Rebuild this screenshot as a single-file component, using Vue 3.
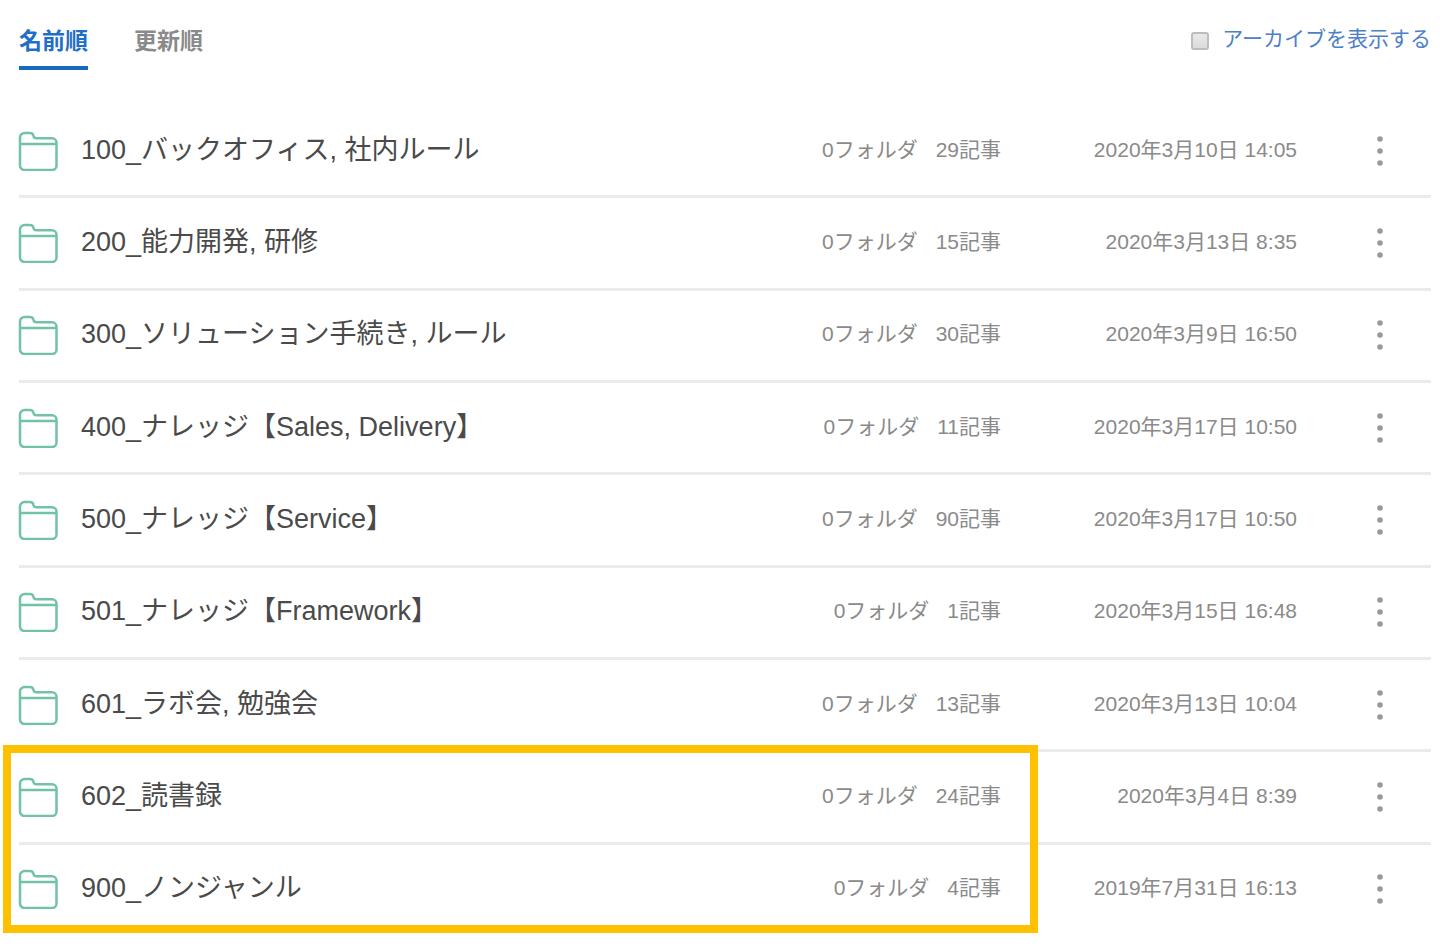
<script setup>
import { ref } from 'vue'

const sort = ref('name')
const showArchive = ref(false)

const folders = [
  { name: '100_バックオフィス, 社内ルール', articles: 29, updated: '2020年3月10日 14:05' },
  { name: '200_能力開発, 研修', articles: 15, updated: '2020年3月13日 8:35' },
  { name: '300_ソリューション手続き, ルール', articles: 30, updated: '2020年3月9日 16:50' },
  { name: '400_ナレッジ【Sales, Delivery】', articles: 11, updated: '2020年3月17日 10:50' },
  { name: '500_ナレッジ【Service】', articles: 90, updated: '2020年3月17日 10:50' },
  { name: '501_ナレッジ【Framework】', articles: 1, updated: '2020年3月15日 16:48' },
  { name: '601_ラボ会, 勉強会', articles: 13, updated: '2020年3月13日 10:04' },
  { name: '602_読書録', articles: 24, updated: '2020年3月4日 8:39' },
  { name: '900_ノンジャンル', articles: 4, updated: '2019年7月31日 16:13' },
]
</script>

<template>
  <main class="page">
    <header class="toolbar">
      <nav class="tabs">
        <button type="button" class="tab" :class="{ active: sort === 'name' }" @click="sort = 'name'">名前順</button>
        <button type="button" class="tab" :class="{ active: sort === 'updated' }" @click="sort = 'updated'">更新順</button>
      </nav>
      <div class="archive">
        <input id="archive" v-model="showArchive" type="checkbox" class="check" />
        <label for="archive">アーカイブを表示する</label>
      </div>
    </header>

    <ul class="folders">
      <li v-for="folder in folders" :key="folder.name" class="row">
        <svg class="icon" viewBox="0 0 40 40" aria-hidden="true">
          <path class="line" d="M2 34V6.500a4.500 4.500 0 0 1 4.500-4.500h5.500q3 0 3.500 3q.5 2.200 3 2.200H34a4.500 4.500 0 0 1 4.500 4.500V34.500a4.500 4.500 0 0 1-4.500 4.500H6.500a4.500 4.500 0 0 1-4.500-4.500ZM2 13H38.500" />
        </svg>
        <a href="#" class="name">{{ folder.name }}</a>
        <span class="counts">
          <span>0フォルダ</span>
          <span>{{ folder.articles }}記事</span>
        </span>
        <time class="updated">{{ folder.updated }}</time>
        <button type="button" class="more" :aria-label="folder.name">
          <svg class="dots" viewBox="0 0 6 30" aria-hidden="true">
            <circle cx="3" cy="3" r="2.800" />
            <circle cx="3" cy="15" r="2.800" />
            <circle cx="3" cy="27" r="2.800" />
          </svg>
        </button>
      </li>
      <li class="highlight" aria-hidden="true"></li>
    </ul>
  </main>
</template>

<style>
body {
  margin: 0;
  background: #fff;
}
</style>

<style scoped>
.page {
  display: flex;
  flex-direction: column;
  box-sizing: border-box;
  min-height: 100vh;
  padding: 0 9px 11px 19px;
  font-family: "Liberation Sans", "Noto Sans CJK JP", sans-serif;
  font-size: 21px;
  line-height: 30px;
  color: #8a8a8a;
}

.toolbar {
  display: flex;
  justify-content: space-between;
  align-items: flex-start;
  height: 106px;
}

.tabs {
  display: flex;
  gap: 46px;
  padding-top: 26px;
}

.tab {
  padding: 0 0 10px;
  border: 0;
  border-bottom: 4px solid transparent;
  background: none;
  font: inherit;
  font-size: 23px;
  font-weight: 700;
  color: #8a8a8a;
  cursor: pointer;
}

.tab.active {
  border-color: #1769c0;
  color: #1f6fc6;
}

.archive {
  display: flex;
  align-items: center;
  gap: 13px;
  padding-top: 24px;
  color: #4f7fc9;
}

.check {
  appearance: none;
  box-sizing: border-box;
  width: 18px;
  height: 18px;
  margin: 4px 0 0;
  border: 2px solid #bdbdbd;
  border-radius: 3px;
  background: linear-gradient(#e9e9e9, #dcdcdc);
}

.check:checked {
  background: #1769c0;
}

.folders {
  position: relative;
  flex: 1;
  display: grid;
  grid-auto-rows: 1fr;
  margin: 0;
  padding: 0;
  list-style: none;
}

.row {
  display: grid;
  grid-template-columns: 40px 1fr auto 296px 134px;
  align-items: center;
  border-bottom: 3px solid #ebebeb;
}

.row:nth-child(9) {
  border-color: transparent;
}

.icon {
  width: 40px;
  height: 40px;
  margin-left: -1px;
}

.line {
  fill: none;
  stroke: #72c2a7;
  stroke-width: 2.5;
}

.name,
.counts,
.updated {
  padding-bottom: 2px;
  white-space: nowrap;
}

.name {
  padding-left: 22px;
  font-size: 27px;
  color: #4a4a4a;
  text-decoration: none;
}

.counts {
  display: flex;
  gap: 18px;
}

.updated {
  text-align: right;
}

.more {
  display: flex;
  justify-content: center;
  padding: 8px 0 8px 32px;
  border: 0;
  background: none;
  cursor: pointer;
}

.dots {
  width: 6px;
  height: 30px;
  fill: #999;
}

.highlight {
  position: absolute;
  grid-area: 8 / 1 / 10 / 2;
  inset: -7px 393px 4px -16px;
  border: 8px solid #ffc000;
  pointer-events: none;
}
</style>
